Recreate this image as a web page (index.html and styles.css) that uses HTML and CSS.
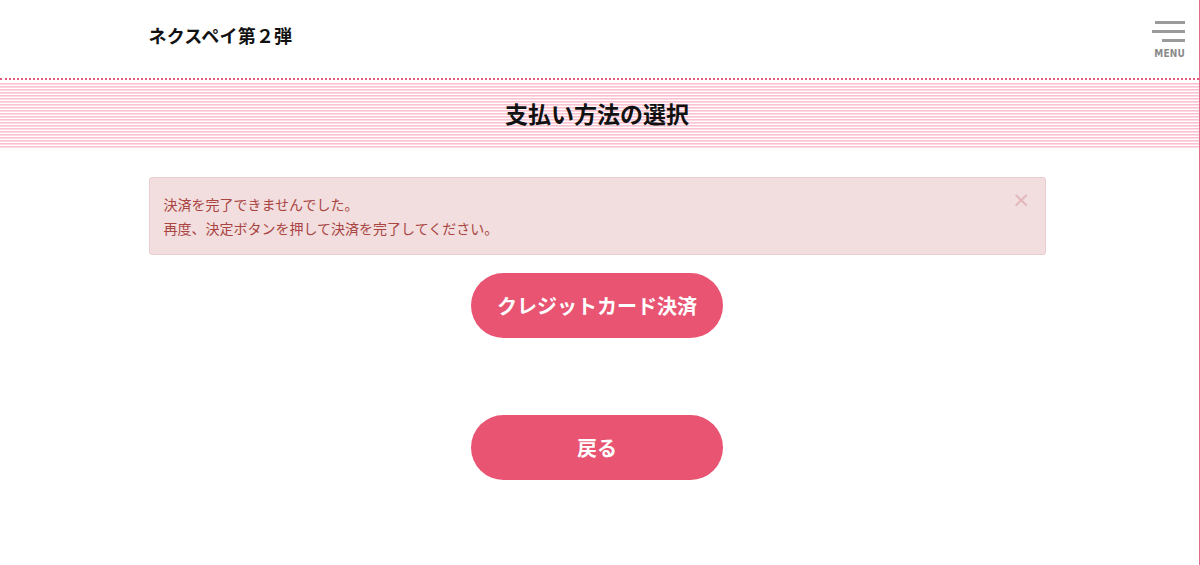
FILE: index.html
```html
<!DOCTYPE html>
<html lang="ja">
  <head>
    <meta charset="UTF-8" />
    <meta name="viewport" content="width=device-width, initial-scale=1.0" />
    <title>支払い方法の選択</title>
    <link rel="stylesheet" href="styles.css">
  </head>
  <body>
    <header class="site-header">
      <div class="header-inner">
        <h1 class="site-title">ネクスペイ第２弾</h1>
      </div>
      <button class="menu-btn" type="button">
        <span class="bar bar-1"></span>
        <span class="bar bar-2"></span>
        <span class="bar bar-3"></span>
        <span class="menu-label">MENU</span>
      </button>
    </header>

    <!-- Page title band -->
    <div class="title-band">
      <h2 class="page-title">支払い方法の選択</h2>
    </div>

    <main class="container">
      <div class="alert">
        <span class="alert-close">&times;</span>
        <p>決済を完了できませんでした。</p>
        <p>再度、決定ボタンを押して決済を完了してください。</p>
      </div>

      <div class="actions">
        <button class="pill-btn" type="button">クレジットカード決済</button>
        <button class="pill-btn back" type="button">戻る</button>
      </div>
    </main>
  </body>
</html>
```

FILE: styles.css
```css
html,
body {
  margin: 0;
  padding: 0;
}
body {
  min-height: 565px;
  box-sizing: border-box;
  border-right: 1px solid #e36b8c;
  font-family: "Noto Sans CJK JP", "Noto Sans", sans-serif;
  color: #111;
  background: #fff;
}
.site-header {
  position: relative;
  height: 78px;
}
.header-inner {
  width: 897px;
  margin: 0 auto;
  padding-right: 5px;
}
.site-title {
  margin: 0;
  padding-top: 21px;
  font-size: 18px;
  line-height: 28px;
  font-weight: 700;
  letter-spacing: 0.2px;
}
.menu-btn {
  position: absolute;
  top: 21px;
  right: 14px;
  width: 34px;
  height: 42px;
  padding: 0;
  border: none;
  background: none;
  cursor: pointer;
}
.bar {
  position: absolute;
  right: 0;
  height: 3px;
  background: #9a9a9a;
}
.bar-1 {
  top: 0;
  width: 30px;
}
.bar-2 {
  top: 9px;
  width: 33px;
}
.bar-3 {
  top: 18px;
  width: 23px;
}
.menu-label {
  position: absolute;
  top: 27px;
  right: 0;
  font-family: "DejaVu Sans Condensed", "DejaVu Sans", sans-serif;
  font-size: 10px;
  font-weight: 700;
  color: #8a8a8a;
  letter-spacing: 0.2px;
}
.title-band {
  border-top: 2px dotted #e2577e;
  padding-top: 3px;
  background: #fff;
}
.page-title {
  margin: 0;
  height: 66px;
  box-sizing: border-box;
  padding: 0 5px 5px 0;
  line-height: 60px;
  text-align: center;
  font-size: 23px;
  font-weight: 700;
  background: repeating-linear-gradient(
    to bottom,
    #fbc1d1 0,
    #fbc1d1 1px,
    #fdd9e3 1px,
    #fdd9e3 2px,
    #fff 2px,
    #fff 3px
  );
}
.container {
  width: 897px;
  margin: 0 auto;
  padding: 28px 5px 0 0;
}
.alert {
  position: relative;
  padding: 14px 14px;
  background: #f2dede;
  border: 1px solid #ebccd1;
  border-radius: 3px;
  color: #a94442;
  font-size: 14px;
  line-height: 24px;
}
.alert p {
  margin: 0;
}
.alert-close {
  position: absolute;
  top: 8px;
  right: 14px;
  font-size: 22px;
  line-height: 28px;
  color: #e3b5bc;
  font-family: "DejaVu Sans", sans-serif;
}
.actions {
  display: flex;
  flex-direction: column;
  align-items: center;
  gap: 77px;
  padding-top: 18px;
}
.pill-btn {
  width: 252px;
  height: 65px;
  border: none;
  border-radius: 33px;
  background-color: #e85472;
  color: #fff;
  font-family: "Noto Sans CJK JP", "Noto Sans", sans-serif;
  font-size: 20px;
  font-weight: 700;
  cursor: pointer;
}
.pill-btn:hover {
  background-color: #d94463;
}
```
